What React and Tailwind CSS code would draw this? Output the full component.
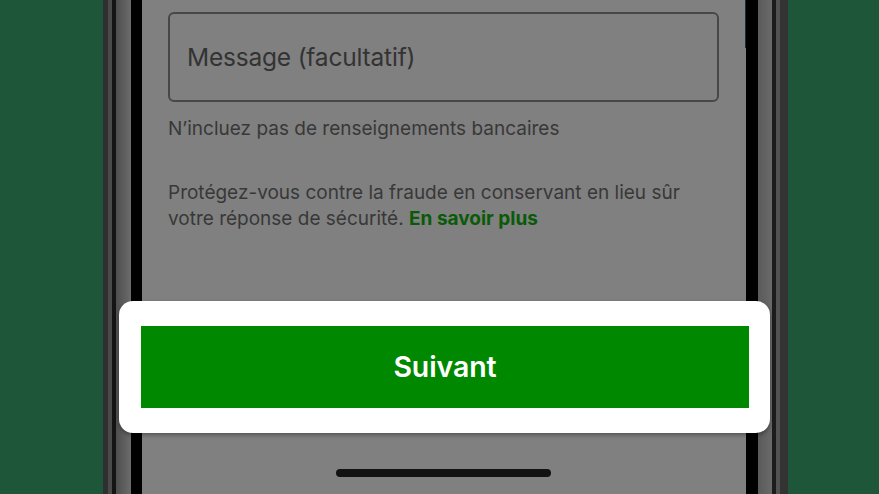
export default function App() {
  return (
    <div className="relative w-[879px] h-[494px] overflow-hidden bg-[#1d5639] flex" style={{ fontFamily: "Inter, 'Noto Sans', sans-serif" }}>
      <div className="w-[103px] shrink-0" />
      {/* left frame */}
      <div className="flex shrink-0 h-full">
        <div className="w-[5px] bg-[#2f2f2f]" />
        <div className="w-[4px] bg-[#4a4a4a]" />
        <div className="w-[4px] bg-[#141414]" />
        <div className="w-[15px] bg-gradient-to-r from-[#4e4e4e] to-[#6c6c6c]" />
        <div className="w-[11px] bg-black" />
      </div>
      {/* screen */}
      <div className="w-[604px] shrink-0 h-full bg-[#808080] flex flex-col pl-[26px] pr-[27px] relative">
        <div className="mt-[12px] h-[90px] rounded-[6px] border-2 border-[#474747] flex items-center pl-[17px]">
          <span className="text-[24.5px] text-[#333333] tracking-[-0.2px] leading-none">Message (facultatif)</span>
        </div>
        <p className="mt-[14px] text-[19px] leading-[26px] text-[#383838]">N’incluez pas de renseignements bancaires</p>
        <p className="mt-[38px] text-[19px] leading-[26px] text-[#383838]">
          <span>Protégez-vous contre la fraude en conservant en lieu sûr</span>
          <br />
          <span>votre réponse de sécurité. </span>
          <span className="font-bold text-[#0a5a0a]">En savoir plus</span>
        </p>
        <div className="mt-auto mb-[17px] self-center w-[215px] h-[8px] rounded-full bg-[#121212]" />
        <div className="absolute right-0 top-0 w-[1px] h-[48px] bg-[#1a2a40]" />
      </div>
      {/* right frame */}
      <div className="flex shrink-0 h-full">
        <div className="w-[12px] bg-black" />
        <div className="w-[14px] bg-gradient-to-r from-[#5a5a5a] to-[#6a6a6a]" />
        <div className="w-[4px] bg-[#1c1c1c]" />
        <div className="w-[4px] bg-[#525252]" />
        <div className="w-[8px] bg-[#333333]" />
      </div>
      {/* highlighted button card */}
      <div className="absolute left-[119px] top-[301px] w-[651px] h-[132px] bg-white rounded-[14px] shadow-[0_2px_4px_rgba(0,0,0,0.35)] pl-[22px] pr-[21px] py-[25px] flex">
        <div className="flex-1 bg-[#008800] flex items-center justify-center">
          <span className="text-white text-[28.5px] font-semibold tracking-[-0.1px]">Suivant</span>
        </div>
      </div>
    </div>
  );
}
